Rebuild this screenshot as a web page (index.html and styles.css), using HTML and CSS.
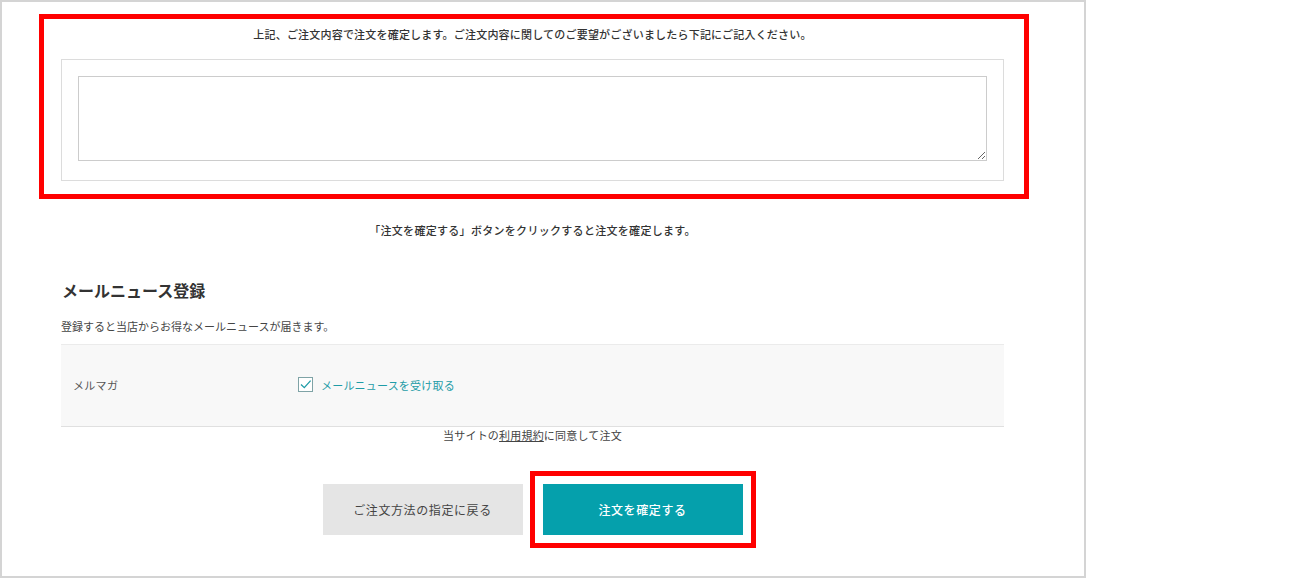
FILE: index.html
```html
<!DOCTYPE html>
<html lang="ja">
  <head>
    <meta charset="UTF-8" />
    <meta name="viewport" content="width=device-width, initial-scale=1.0" />
    <title>ご注文内容の確認</title>
    <link rel="stylesheet" href="styles.css">
  </head>
  <body>
    <div class="frame">
      <div class="remarks">
        <p class="remarks-lead">上記、ご注文内容で注文を確定します。ご注文内容に関してのご要望がございましたら下記にご記入ください。</p>
        <div class="remarks-box">
          <textarea class="remarks-input"></textarea>
        </div>
      </div>

      <div class="content">
        <p class="confirm-note">「注文を確定する」ボタンをクリックすると注文を確定します。</p>

        <h2 class="section-title">メールニュース登録</h2>
        <p class="section-desc">登録すると当店からお得なメールニュースが届きます。</p>

        <div class="form-row">
          <div class="form-label">メルマガ</div>
          <label class="check">
            <span class="check-box">
              <svg width="15" height="15" viewBox="0 0 15 15">
                <rect x="0.5" y="0.5" width="14" height="14" fill="#fff" stroke="#7fa3a6" />
                <path d="M3 7.5 L6.3 10.6 L12.6 3.6" fill="none" stroke="#1f9ca7" stroke-width="1.3" />
              </svg>
            </span>
            メールニュースを受け取る
          </label>
        </div>

        <p class="agree">当サイトの<a href="#">利用規約</a>に同意して注文</p>

        <div class="actions">
          <button class="btn btn-back">ご注文方法の指定に戻る</button>
          <button class="btn btn-submit">注文を確定する</button>
        </div>
      </div>
    </div>
  </body>
</html>
```

FILE: styles.css
```css
body {
  margin: 0;
  padding: 0;
  background-color: #fff;
  color: #333;
  font-family: "Noto Sans CJK JP", "Noto Sans", sans-serif;
}

p {
  margin: 0;
}

.frame {
  width: 1086px;
  height: 578px;
  box-sizing: border-box;
  border: 2px solid #d4d4d4;
  padding: 12px 0 0 37px;
  overflow: hidden;
}

/* annotated remarks block */
.remarks {
  width: 990px;
  box-sizing: border-box;
  border: 5px solid #ff0000;
  padding: 5px 20px 13px 17px;
}

.remarks-lead {
  font-size: 11px;
  line-height: 20px;
  letter-spacing: 0.2px;
  font-weight: 500;
  text-align: center;
  color: #333;
  margin-bottom: 15px;
}

.remarks-box {
  border: 1px solid #dcdcdc;
  padding: 16px 16px 19px 16px;
}

.remarks-input {
  display: block;
  width: 100%;
  height: 85px;
  box-sizing: border-box;
  border: 1px solid #cccccc;
  margin: 0;
  resize: vertical;
}

.content {
  width: 943px;
  margin-left: 22px;
}

.confirm-note {
  margin-top: 21px;
  font-size: 11px;
  line-height: 20px;
  letter-spacing: 0.3px;
  font-weight: 500;
  text-align: center;
}

.section-title {
  margin: 38px 0 0 1px;
  font-size: 16px;
  line-height: 24px;
  font-weight: bold;
  color: #333;
}

.section-desc {
  margin-top: 14px;
  font-size: 11px;
  line-height: 20px;
  color: #444;
}

.form-row {
  margin-top: 8px;
  display: grid;
  grid-template-columns: 225px 1fr;
  align-items: center;
  padding-left: 12px;
  padding-bottom: 2px;
  box-sizing: border-box;
  height: 83px;
  background-color: #f8f8f8;
  border-top: 1px solid #ebebeb;
  border-bottom: 1px solid #e0e0e0;
}

.form-label {
  font-size: 11px;
  color: #555;
  letter-spacing: 0.3px;
}

.check {
  display: flex;
  align-items: center;
  gap: 8px;
  font-size: 11px;
  letter-spacing: 0.2px;
  color: #1f9ca7;
  cursor: pointer;
}

.check-box {
  display: block;
  width: 15px;
  height: 15px;
}

.check-box svg {
  display: block;
}

.agree {
  font-size: 11px;
  line-height: 16px;
  letter-spacing: 0.2px;
  text-align: center;
  color: #444;
}

.agree a {
  color: #444;
  text-decoration: underline;
}

.actions {
  margin-top: 41px;
  display: flex;
  justify-content: center;
  gap: 20px;
}

.btn {
  width: 200px;
  height: 51px;
  border: none;
  font-family: "Noto Sans CJK JP", "Noto Sans", sans-serif;
  font-size: 12px;
  letter-spacing: 0.6px;
  cursor: pointer;
}

.btn-back {
  background-color: #e5e5e5;
  color: #444;
}

.btn-submit {
  background-color: #05a0ac;
  color: #fff;
  font-weight: 500;
  outline: 5px solid #ff0000;
  outline-offset: 8px;
}
```
